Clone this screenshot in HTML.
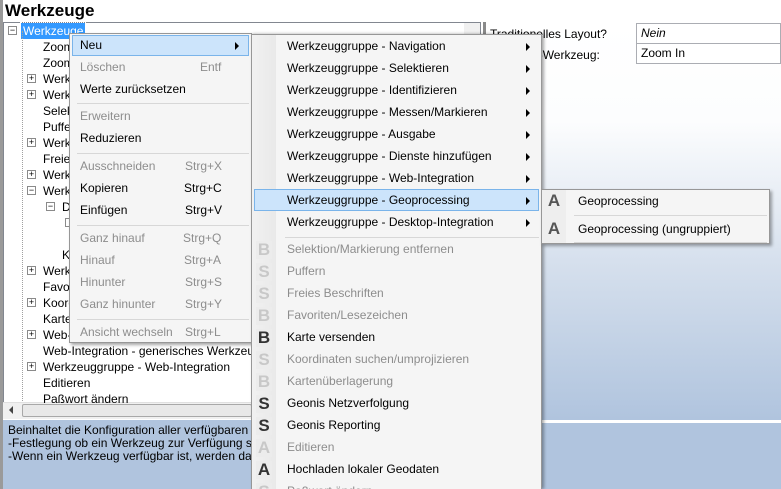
<!DOCTYPE html>
<html><head><meta charset="utf-8"><style>
*{margin:0;padding:0;box-sizing:border-box}
html{overflow:hidden;height:489px}
body{width:781px;height:489px;overflow:hidden;position:relative;background:#fff;font-family:"Liberation Sans",sans-serif;font-size:12px;color:#000}
.a{position:absolute;white-space:nowrap}
.t{position:absolute;white-space:nowrap;line-height:16px;height:16px}
.pb{position:absolute;width:9px;height:9px;border:1px solid #8a8a8a;background:#fff;font-size:9px;line-height:7px;text-align:center;color:#000}
.m{position:absolute;background:#f5f5f5;border:1px solid #979797;box-shadow:2px 2px 3px rgba(0,0,0,.35);overflow:hidden}
.mi{position:absolute;left:0;right:0;height:22px;line-height:21px}
.dis{color:#8d8d8d}
.sep{position:absolute;height:1px;background:#d7d7d7}
.arr{position:absolute;width:0;height:0;border-top:4px solid transparent;border-bottom:4px solid transparent;border-left:4px solid #000}
.hl{position:absolute;background:#cce4fb;border:1px solid #7ab4ea}
.ic{position:absolute;left:4px;width:16px;height:18px;font:bold 17px "Liberation Sans",sans-serif;line-height:18px;text-align:center;background:#ececec}
</style></head><body>
<div class="a" style="left:0;top:0;width:3px;height:489px;background:#9a9a9a"></div>
<div class="a" style="left:5px;top:1px;font-size:17px;font-weight:bold;line-height:20px">Werkzeuge</div>
<div class="a" style="left:3px;top:22px;width:478px;height:397px;border:1px solid #828790;background:#fff"></div>
<div class="a" style="left:464px;top:23px;width:16px;height:379px;background:#f0f0f0"></div>
<div class="a" style="left:3px;top:402px;width:478px;height:17px;background:#f0f0f0;border-top:1px solid #e0e0e0"></div>
<div class="a" style="left:22px;top:404px;width:230px;height:13px;background:#e8e8e8;border:1px solid #a8a8a8;border-radius:2px"></div>
<div class="a" style="left:9px;top:406px;width:0;height:0;border-top:4px solid transparent;border-bottom:4px solid transparent;border-right:4px solid #444"></div>
<div class="pb" style="left:8px;top:26px">−</div>
<div class="t" style="left:21px;top:23px;background:#3399ff;color:#fff;padding:0 2px;outline:1px dotted #fff">Werkzeuge</div>
<div class="a" style="left:22px;top:31px;width:1px;height:370px;border-left:1px dotted #a0a0a0"></div>
<div class="t" style="left:43px;top:39px">Zoom</div>
<div class="t" style="left:43px;top:55px">Zoom</div>
<div class="pb" style="left:27px;top:74px">+</div><div class="t" style="left:43px;top:71px">Werk</div>
<div class="pb" style="left:27px;top:90px">+</div><div class="t" style="left:43px;top:87px">Werk</div>
<div class="t" style="left:43px;top:103px">Selek</div>
<div class="t" style="left:43px;top:119px">Puffe</div>
<div class="pb" style="left:27px;top:138px">+</div><div class="t" style="left:43px;top:135px">Werk</div>
<div class="t" style="left:43px;top:151px">Freie</div>
<div class="pb" style="left:27px;top:170px">+</div><div class="t" style="left:43px;top:167px">Werk</div>
<div class="pb" style="left:27px;top:186px">−</div><div class="t" style="left:43px;top:183px">Werk</div>
<div class="pb" style="left:46px;top:202px">−</div><div class="t" style="left:62px;top:199px">D</div>
<div class="pb" style="left:65px;top:218px"></div>
<div class="t" style="left:62px;top:247px">K</div>
<div class="pb" style="left:27px;top:266px">+</div><div class="t" style="left:43px;top:263px">Werk</div>
<div class="t" style="left:43px;top:279px">Favo</div>
<div class="pb" style="left:27px;top:298px">+</div><div class="t" style="left:43px;top:295px">Koord</div>
<div class="t" style="left:43px;top:311px">Karte</div>
<div class="pb" style="left:27px;top:330px">+</div><div class="t" style="left:43px;top:327px">Web-</div>
<div class="t" style="left:43px;top:343px">Web-Integration - generisches Werkzeug 4</div>
<div class="pb" style="left:27px;top:362px">+</div><div class="t" style="left:43px;top:359px">Werkzeuggruppe - Web-Integration</div>
<div class="t" style="left:43px;top:375px">Editieren</div>
<div class="t" style="left:43px;top:391px">Paßwort ändern</div>
<div class="a" style="left:3px;top:420px;width:480px;height:69px;background:#b0c4de;font-size:12px;line-height:13px;padding:4px 5px">Beinhaltet die Konfiguration aller verfügbaren Werkzeuge<br>-Festlegung ob ein Werkzeug zur Verfügung steht<br>-Wenn ein Werkzeug verfügbar ist, werden das Verhalten</div>
<div class="a" style="left:481px;top:22px;width:300px;height:398px;background:linear-gradient(#fff,#fcfdfe 25%,#d6e0ed 60%,#b0c4de)"></div>
<div class="a" style="left:481px;top:420px;width:300px;height:3px;background:#fff"></div>
<div class="a" style="left:481px;top:423px;width:300px;height:66px;background:#b0c4de"></div>
<div class="a" style="left:483px;top:22px;width:3px;height:467px;background:#8a8a8a"></div>
<div class="a" style="left:490px;top:27px">Traditionelles Layout?</div>
<div class="a" style="left:490px;top:48px">Standard-Werkzeug:</div>
<div class="a" style="left:636px;top:23px;width:145px;height:21px;background:#fff;border:1px solid #abadb3;padding:2px 4px;font-style:italic">Nein</div>
<div class="a" style="left:636px;top:43px;width:145px;height:21px;background:#fff;border:1px solid #abadb3;padding:2px 4px">Zoom In</div>
<div class="m" style="left:69px;top:33px;width:183px;height:310px">
<div class="hl" style="left:2px;top:1px;width:177px;height:21px"></div>
<div class="mi" style="top:1px;padding-left:10px">Neu</div><div class="arr" style="left:165px;top:8px"></div>
<div class="mi dis" style="top:23px;padding-left:10px">Löschen<span class="a" style="left:130px">Entf</span></div>
<div class="mi" style="top:45px;padding-left:10px">Werte zurücksetzen</div>
<div class="sep" style="left:7px;right:2px;top:69px"></div>
<div class="mi dis" style="top:72px;padding-left:10px">Erweitern</div>
<div class="mi" style="top:94px;padding-left:10px">Reduzieren</div>
<div class="sep" style="left:7px;right:2px;top:119px"></div>
<div class="mi dis" style="top:122px;padding-left:10px">Ausschneiden<span class="a" style="left:115px">Strg+X</span></div>
<div class="mi" style="top:144px;padding-left:10px">Kopieren<span class="a" style="left:114px">Strg+C</span></div>
<div class="mi" style="top:166px;padding-left:10px">Einfügen<span class="a" style="left:115px">Strg+V</span></div>
<div class="sep" style="left:7px;right:2px;top:191px"></div>
<div class="mi dis" style="top:194px;padding-left:10px">Ganz hinauf<span class="a" style="left:113px">Strg+Q</span></div>
<div class="mi dis" style="top:216px;padding-left:10px">Hinauf<span class="a" style="left:114px">Strg+A</span></div>
<div class="mi dis" style="top:238px;padding-left:10px">Hinunter<span class="a" style="left:115px">Strg+S</span></div>
<div class="mi dis" style="top:260px;padding-left:10px">Ganz hinunter<span class="a" style="left:115px">Strg+Y</span></div>
<div class="sep" style="left:7px;right:2px;top:285px"></div>
<div class="mi dis" style="top:288px;padding-left:10px">Ansicht wechseln<span class="a" style="left:115px">Strg+L</span></div>
</div>
<div class="m" style="left:251px;top:34px;width:291px;height:455px;border-bottom:none;box-shadow:2px 0 3px rgba(0,0,0,.35)">
<div class="a" style="left:0;top:0;width:24px;height:470px;background:linear-gradient(90deg,#f1f1f1,#e9e9e9)"></div>
<div class="hl" style="left:2px;top:154px;width:285px;height:22px"></div>
<div class="mi" style="top:1px;padding-left:35px">Werkzeuggruppe - Navigation</div><div class="arr" style="left:274px;top:8px"></div>
<div class="mi" style="top:23px;padding-left:35px">Werkzeuggruppe - Selektieren</div><div class="arr" style="left:274px;top:30px"></div>
<div class="mi" style="top:45px;padding-left:35px">Werkzeuggruppe - Identifizieren</div><div class="arr" style="left:274px;top:52px"></div>
<div class="mi" style="top:67px;padding-left:35px">Werkzeuggruppe - Messen/Markieren</div><div class="arr" style="left:274px;top:74px"></div>
<div class="mi" style="top:89px;padding-left:35px">Werkzeuggruppe - Ausgabe</div><div class="arr" style="left:274px;top:96px"></div>
<div class="mi" style="top:111px;padding-left:35px">Werkzeuggruppe - Dienste hinzufügen</div><div class="arr" style="left:274px;top:118px"></div>
<div class="mi" style="top:133px;padding-left:35px">Werkzeuggruppe - Web-Integration</div><div class="arr" style="left:274px;top:140px"></div>
<div class="mi" style="top:155px;padding-left:35px">Werkzeuggruppe - Geoprocessing</div><div class="arr" style="left:274px;top:162px"></div>
<div class="mi" style="top:177px;padding-left:35px">Werkzeuggruppe - Desktop-Integration</div><div class="arr" style="left:274px;top:184px"></div>
<div class="sep" style="left:33px;right:2px;top:202px"></div>
<div class="ic" style="top:206px;color:#c8c8c8">B</div><div class="mi dis" style="top:204px;padding-left:35px">Selektion/Markierung entfernen</div>
<div class="ic" style="top:228px;color:#c8c8c8">S</div><div class="mi dis" style="top:226px;padding-left:35px">Puffern</div>
<div class="ic" style="top:250px;color:#c8c8c8">S</div><div class="mi dis" style="top:248px;padding-left:35px">Freies Beschriften</div>
<div class="ic" style="top:272px;color:#c8c8c8">B</div><div class="mi dis" style="top:270px;padding-left:35px">Favoriten/Lesezeichen</div>
<div class="ic" style="top:294px;color:#333">B</div><div class="mi" style="top:292px;padding-left:35px">Karte versenden</div>
<div class="ic" style="top:316px;color:#c8c8c8">S</div><div class="mi dis" style="top:314px;padding-left:35px">Koordinaten suchen/umprojizieren</div>
<div class="ic" style="top:338px;color:#c8c8c8">B</div><div class="mi dis" style="top:336px;padding-left:35px">Kartenüberlagerung</div>
<div class="ic" style="top:360px;color:#333">S</div><div class="mi" style="top:358px;padding-left:35px">Geonis Netzverfolgung</div>
<div class="ic" style="top:382px;color:#333">S</div><div class="mi" style="top:380px;padding-left:35px">Geonis Reporting</div>
<div class="ic" style="top:404px;color:#c8c8c8">A</div><div class="mi dis" style="top:402px;padding-left:35px">Editieren</div>
<div class="ic" style="top:426px;color:#333">A</div><div class="mi" style="top:424px;padding-left:35px">Hochladen lokaler Geodaten</div>
<div class="ic" style="top:448px;color:#c8c8c8">S</div><div class="mi dis" style="top:446px;padding-left:35px">Paßwort ändern</div>
</div>
<div class="m" style="left:541px;top:189px;width:229px;height:55px">
<div class="a" style="left:0;top:0;width:24px;height:53px;background:#eeeeee"></div>
<div class="ic" style="top:2px;color:#555;background:none">A</div><div class="mi" style="top:1px;padding-left:36px">Geoprocessing</div>
<div class="sep" style="left:32px;right:2px;top:25px"></div>
<div class="ic" style="top:30px;color:#555;background:none">A</div><div class="mi" style="top:29px;padding-left:36px">Geoprocessing (ungruppiert)</div>
<div class="sep" style="left:32px;right:2px;top:52px"></div>
</div>
</body></html>
